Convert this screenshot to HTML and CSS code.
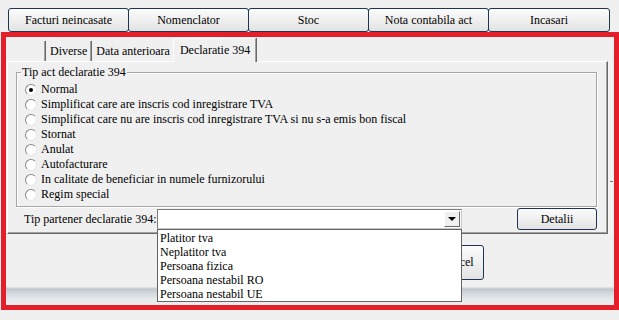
FILE: index.html
```html
<!DOCTYPE html>
<html>
<head>
<meta charset="utf-8">
<link rel="stylesheet" href="styles.css">
</head>
<body>
<div class="toolbar">
  <button class="tbtn">Facturi neincasate</button>
  <button class="tbtn">Nomenclator</button>
  <button class="tbtn">Stoc</button>
  <button class="tbtn">Nota contabila act</button>
  <button class="tbtn last">Incasari</button>
</div>
<div class="frame">
  <div class="tabs">
    <div class="tab blank"></div>
    <div class="tab">Diverse</div>
    <div class="tab">Data anterioara</div>
    <div class="tab active">Declaratie 394</div>
  </div>
  <div class="panel-wrap">
    <div class="panel">
      <div class="group">
        <span class="group-title">Tip act declaratie 394</span>
        <div class="radio-row"><span class="radio checked"></span><span>Normal</span></div>
        <div class="radio-row"><span class="radio"></span><span>Simplificat care are inscris cod inregistrare TVA</span></div>
        <div class="radio-row"><span class="radio"></span><span>Simplificat care nu are inscris cod inregistrare TVA si nu s-a emis bon fiscal</span></div>
        <div class="radio-row"><span class="radio"></span><span>Stornat</span></div>
        <div class="radio-row"><span class="radio"></span><span>Anulat</span></div>
        <div class="radio-row"><span class="radio"></span><span>Autofacturare</span></div>
        <div class="radio-row"><span class="radio"></span><span>In calitate de beneficiar in numele furnizorului</span></div>
        <div class="radio-row"><span class="radio"></span><span>Regim special</span></div>
      </div>
      <div class="partner-row">
        <span class="partner-label">Tip partener declaratie 394:</span>
        <div class="combo">
          <span class="combo-arrow"><span class="tri"></span></span>
          <div class="dropdown">
            <div class="opt">Platitor tva</div>
            <div class="opt">Neplatitor tva</div>
            <div class="opt">Persoana fizica</div>
            <div class="opt">Persoana nestabil RO</div>
            <div class="opt">Persoana nestabil UE</div>
          </div>
        </div>
        <button class="btn detalii">Detalii</button>
      </div>
    </div>
    <div class="side"><span class="tick"></span></div>
  </div>
  <div class="footer">
    <button class="btn cancel">Cancel</button>
  </div>
  <div class="shade"></div>
</div>
</body>
</html>
```
FILE: styles.css
```css
html, body {
  margin: 0;
  padding: 0;
}
body {
  background: #f0f0f0;
  font-family: "Liberation Serif", "Times New Roman", serif;
  font-size: 12px;
  color: #000;
  width: 619px;
  height: 320px;
  overflow: hidden;
}
button {
  font-family: "Liberation Serif", "Times New Roman", serif;
  font-size: 12px;
  color: #000;
  padding: 0;
  margin: 0;
}
.toolbar {
  display: flex;
  padding: 8px 0 0 8px;
  height: 24px;
}
.tbtn {
  width: 121px;
  height: 24px;
  box-sizing: border-box;
  border: 1px solid #1b3553;
  border-radius: 3px;
  background: linear-gradient(#fbfbfb, #ededed 60%, #e3e3e3);
  margin-right: -1px;
  line-height: 20px;
}
.tbtn.last {
  width: 122px;
}
.frame {
  margin-left: 1px;
  width: 618px;
  height: 278px;
  box-sizing: border-box;
  border: 5px solid #e51f2a;
  display: flex;
  flex-direction: column;
  background: #f0f0f0;
}
.tabs {
  display: flex;
  align-items: flex-end;
  height: 24px;
  padding-left: 1px;
}
.tab {
  height: 20px;
  line-height: 20px;
  box-sizing: border-box;
  border-right: 1px solid #a0a0a0;
  box-shadow: 1px 0 0 #696969;
  padding: 0 3px 0 4px;
  margin-right: 1px;
  white-space: nowrap;
}
.tab.blank {
  width: 38px;
}
.tab.active {
  height: 24px;
  line-height: 22px;
  padding: 0 5px 0 6px;
  border-top: 1px solid #fff;
  border-left: 1px solid #fff;
  margin-left: -2px;
  margin-bottom: -1px;
  background: #f0f0f0;
  position: relative;
  z-index: 2;
}
.panel-wrap {
  display: flex;
}
.panel {
  margin-left: 1px;
  width: 601px;
  height: 173px;
  box-sizing: border-box;
  border: 1px solid;
  border-color: #fff #696969 #696969 #fff;
  box-shadow: inset -1px -1px 0 #a0a0a0;
  padding: 10px 10px 0 8px;
}
.side {
  flex: 1;
  position: relative;
  background: #f3f3f3;
}
.tick {
  position: absolute;
  left: 2px;
  top: 120px;
  width: 3px;
  height: 1px;
  background: #777;
}
.group {
  position: relative;
  border: 1px solid #a6a6a6;
  box-shadow: inset 1px 1px 0 #fff, 1px 1px 0 #fff;
  height: 135px;
  box-sizing: border-box;
  padding: 9px 0 0 8px;
}
.group-title {
  position: absolute;
  left: 4px;
  top: -8px;
  padding: 0 1px;
  background: #f0f0f0;
  line-height: 14px;
}
.radio-row {
  display: flex;
  align-items: center;
  height: 15px;
  white-space: nowrap;
}
.radio {
  width: 12px;
  height: 12px;
  box-sizing: border-box;
  border-radius: 50%;
  border: 1px solid;
  border-color: #8a8a8a #e6e6e6 #e6e6e6 #8a8a8a;
  background: #fff;
  margin-right: 4px;
  position: relative;
}
.radio.checked::after {
  content: "";
  position: absolute;
  left: 3px;
  top: 3px;
  width: 4px;
  height: 4px;
  border-radius: 50%;
  background: #000;
}
.partner-row {
  display: flex;
  align-items: center;
  height: 22px;
  margin-top: 1px;
  padding-left: 8px;
}
.partner-label {
  width: 133px;
  white-space: nowrap;
}
.combo {
  position: relative;
  width: 305px;
  height: 20px;
  box-sizing: border-box;
  border: 1px solid;
  border-color: #7a7a7a #c8c8c8 #c8c8c8 #7a7a7a;
  background: #fff;
}
.combo-arrow {
  position: absolute;
  right: 1px;
  top: 1px;
  width: 16px;
  height: 16px;
  box-sizing: border-box;
  border: 1px solid;
  border-color: #fff #696969 #696969 #fff;
  background: #f0f0f0;
  display: flex;
  align-items: center;
  justify-content: center;
}
.tri {
  width: 0;
  height: 0;
  border-left: 4px solid transparent;
  border-right: 4px solid transparent;
  border-top: 4px solid #000;
}
.dropdown {
  position: absolute;
  left: -1px;
  top: 19px;
  width: 305px;
  height: 73px;
  box-sizing: border-box;
  border: 1px solid #646464;
  background: #fff;
  padding-top: 1px;
  z-index: 10;
}
.opt {
  line-height: 14px;
  padding-left: 2px;
  white-space: nowrap;
}
.btn {
  box-sizing: border-box;
  border: 1px solid #1b3553;
  border-radius: 3px;
  background: linear-gradient(#fbfbfb, #ededed 60%, #e3e3e3);
}
.detalii {
  margin-left: auto;
  width: 80px;
  height: 22px;
}
.footer {
  height: 53px;
  display: flex;
  align-items: flex-start;
  padding: 11px 0 0 424px;
  box-sizing: border-box;
}
.cancel {
  width: 54px;
  height: 35px;
}
.shade {
  flex: 1;
  background: linear-gradient(#e8eaec 0, #bfc6cd 2px, #d3d8dd 6px, #e5e8eb 12px, #eceef0 100%);
}
```
